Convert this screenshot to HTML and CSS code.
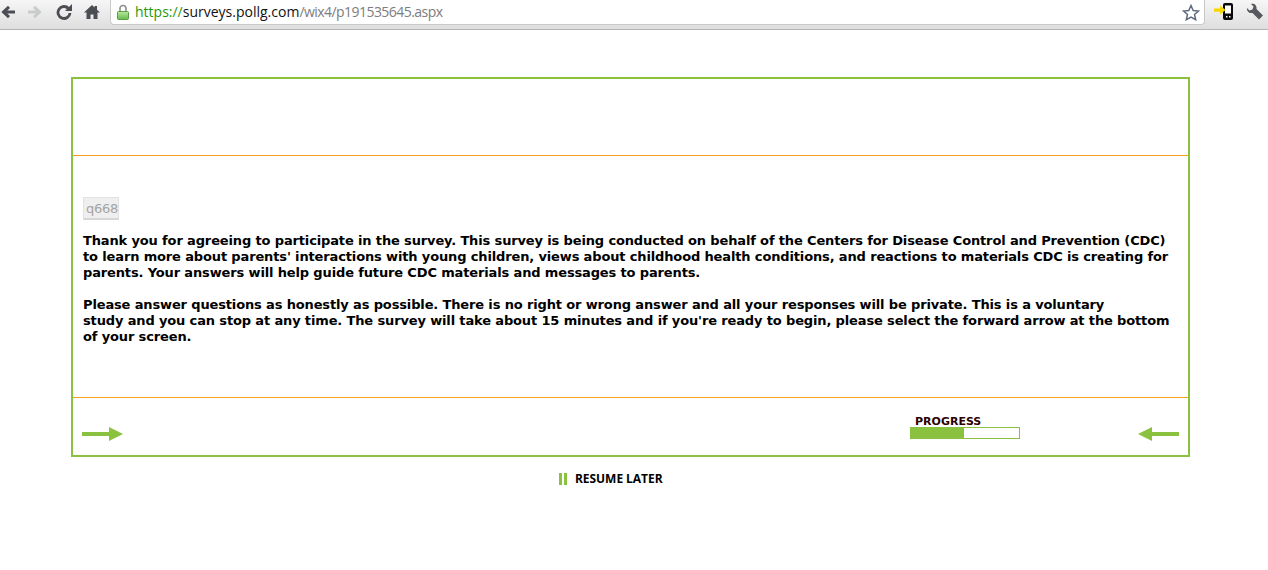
FILE: index.html
```html
<!DOCTYPE html>
<html lang="en">
<head>
<meta charset="utf-8">
<title>Survey</title>
<link rel="stylesheet" href="styles.css">
</head>
<body>
<header class="toolbar">
  <svg class="tool" width="16" height="16" viewBox="0 0 16 16"><path d="M15 8H4.500M9 2.800 3.500 8 9 13.200" fill="none" stroke="#4a4d52" stroke-width="3"/></svg>
  <svg class="tool fwd" width="16" height="16" viewBox="0 0 16 16"><path d="M0 8h10.500M6 2.800 11.500 8 6 13.200" fill="none" stroke="#c9cbcd" stroke-width="3"/></svg>
  <svg class="tool reload" width="16" height="16" viewBox="0 0 16 16"><path d="M12.500 4.500A6 6 0 1 0 14 9" fill="none" stroke="#4a4d52" stroke-width="2.800"/><path d="M9 7h7V0z" fill="#4a4d52"/></svg>
  <svg class="tool home" width="16" height="16" viewBox="0 0 16 16"><path d="M8 1 0 8.500h2.500V15H6.500v-4.500h3V15h4V8.500H16l-3-2.800V2h-2.500v1.400z" fill="#4a4d52"/></svg>
  <div class="omnibox">
    <svg class="lock" width="12" height="16" viewBox="0 0 12 16"><defs><linearGradient id="lockfill" x1="0" y1="0" x2="0" y2="1"><stop offset="0" stop-color="#b5e8a0"/><stop offset="1" stop-color="#66bb48"/></linearGradient></defs><path d="M3 8V4.500a3 3 0 0 1 6 0V8" fill="none" stroke="#8f948d" stroke-width="1.700"/><rect x=".5" y="7.500" width="11" height="8" rx="1" fill="url(#lockfill)" stroke="#5f9a45"/></svg>
    <span class="url"><span class="scheme">https://</span><span class="host">surveys.pollg.com</span><span class="path">/wix4/p191535645.aspx</span></span>
    <svg class="star" width="18" height="17" viewBox="0 0 18 17"><path d="M9 1.500 11.200 6.500l5.300.5-4 3.500 1.200 5.200L9 13l-4.700 2.700 1.200-5.200-4-3.500 5.300-.5z" fill="#fff" stroke="#5f6b7d" stroke-width="1.500"/></svg>
  </div>
  <div class="extras">
    <svg width="20" height="20" viewBox="0 0 20 20"><rect x="9" y="1" width="10" height="17" rx="2" fill="#0a0a0a"/><rect x="11" y="3.500" width="6" height="8" fill="#fff"/><path d="M12 14h1.500v1.500H12zM15 14h1.500v1.500H15z" fill="#fff"/><path d="M0 6.500h6V3.500L11.500 8 6 12.500v-2.800H0z" fill="#f5d800"/></svg>
    <svg width="18" height="18" viewBox="0 0 18 18"><path d="M1 5 3.500 7.500 6.500 6.500 7.500 3.500 5 1C8 0 11 2 10.500 6L17 12.500 13 16.500 6.500 10C3 10.500 0.500 8 1 5z" fill="#55585c"/></svg>
  </div>
</header>
<main class="page">
  <section class="survey">
    <div class="survey-head"></div>
    <div class="survey-body">
      <div class="qtag">q668</div>
      <p class="copy">Thank you for agreeing to participate in the survey. This survey is being conducted on behalf of the Centers for Disease Control and Prevention (CDC)<br>to learn more about parents' interactions with young children, views about childhood health conditions, and reactions to materials CDC is creating for<br>parents. Your answers will help guide future CDC materials and messages to parents.</p>
      <p class="copy">Please answer questions as honestly as possible. There is no right or wrong answer and all your responses will be private. This is a voluntary<br>study and you can stop at any time. The survey will take about 15 minutes and if you're ready to begin, please select the forward arrow at the bottom<br>of your screen.</p>
    </div>
    <div class="survey-foot">
      <svg class="arrow" width="42" height="16" viewBox="0 0 42 16"><path d="M0 6h27V1l14 7-14 7v-5H0z" fill="#8ac13f"/></svg>
      <div class="progress">
        <div class="progress-label">PROGRESS</div>
        <div class="progress-track"><div class="progress-fill"></div></div>
      </div>
      <svg class="arrow" width="42" height="16" viewBox="0 0 42 16"><path d="M42 6H15V1L1 8l14 7v-5h27z" fill="#8ac13f"/></svg>
    </div>
  </section>
  <div class="resume"><span class="pause"></span><span>RESUME LATER</span></div>
</main>
</body>
</html>
```
FILE: styles.css
```css
* { box-sizing: border-box; }
html, body { margin: 0; padding: 0; background: #fff; }
body { height: 570px; overflow: hidden; font-family: "DejaVu Sans", Verdana, sans-serif; color: #000; }

.toolbar {
  height: 30px;
  display: flex;
  align-items: center;
  padding-bottom: 5px;
  background: linear-gradient(#f6f6f6, #dedede);
  border-bottom: 1px solid #b4b4b4;
}
.tool { flex: none; }
.fwd { margin-left: 12px; }
.reload { margin-left: 12px; }
.home { margin-left: 12px; }
.omnibox {
  flex: 1;
  height: 25px;
  margin-left: 10px;
  margin-top: 1px;
  padding: 0 4px 0 6px;
  display: flex;
  align-items: center;
  background: #fff;
  border: 1px solid #c9c9c9;
  border-top: 0;
  border-radius: 0 0 4px 4px;
}
.lock { flex: none; }
.url { margin-left: 6px; flex: 1; font: 14px/20px "Open Sans", sans-serif; white-space: nowrap; }
.scheme { color: #1e9a0a; }
.host { color: #111; }
.path { color: #7d7d7d; letter-spacing: -0.55px; }
.extras { flex: none; width: 63px; display: flex; align-items: center; gap: 12px; padding-left: 9px; }
.star { flex: none; }

.page { padding: 47px 78px 0 71px; }
.survey { border: 2px solid #8ac13f; height: 380px; display: flex; flex-direction: column; }
.survey-head { height: 77px; border-bottom: 1px solid #f5a11f; flex: none; }
.survey-body { height: 242px; flex: none; padding: 41px 10px 0; border-bottom: 1px solid #f5a11f; }
.qtag {
  width: 36px; height: 23px; padding-left: 2px;
  font-size: 13px; line-height: 21px; letter-spacing: -0.3px; text-align: center;
  color: #a3a3a3; background: #efefef;
  border: 1px solid #e2e2e2; border-bottom: 2px solid #d6d6d6;
}
.copy { margin: 0 0 16px; font-size: 13px; font-weight: 700; line-height: 16px; letter-spacing: -0.14px; white-space: nowrap; }
.qtag + .copy { margin-top: 13px; }

.survey-foot { flex: 1; display: flex; align-items: center; padding: 14px 9px 0; }
.survey-foot .arrow { flex: none; }
.progress { margin-left: 786px; width: 110px; margin-top: -13px; }
.progress-label { height: 12px; padding: 1px 0 0 5px; font-size: 11px; font-weight: 700; line-height: 12px; color: #2a0000; }
.progress-track { height: 12px; border: 1px solid #8ac13f; background: #fff; }
.progress-fill { width: 49%; height: 100%; background: #8ac13f; }
.survey-foot .arrow:last-child { margin-left: auto; }

.resume {
  display: flex; align-items: center; gap: 8px;
  margin: 14px 0 0 488px;
  font: 700 12px/16px "Open Sans", sans-serif;
  letter-spacing: -0.05px;
}
.pause { width: 8px; height: 12px; border-left: 3px solid #8ac13f; border-right: 3px solid #8ac13f; }
```
